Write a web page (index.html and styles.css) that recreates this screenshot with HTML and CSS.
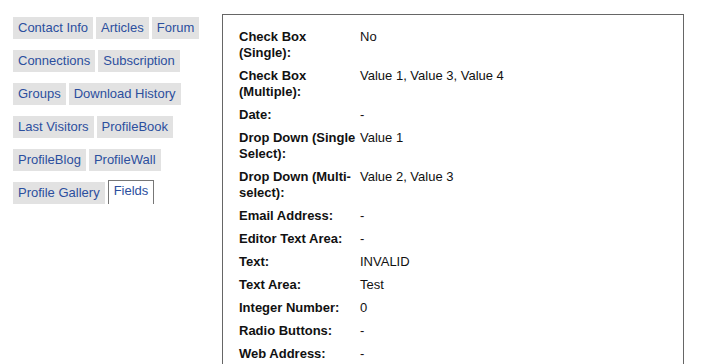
FILE: index.html
```html
<!DOCTYPE html>
<html lang="en">
<head>
  <meta charset="UTF-8" />
  <title>Profile — Fields</title>
  <link rel="stylesheet" href="styles.css">
</head>
<body>

<div class="page">
  <div class="tabs">
    <a href="#" class="tab">Contact Info</a>
    <a href="#" class="tab">Articles</a>
    <a href="#" class="tab">Forum</a>
    <a href="#" class="tab">Connections</a>
    <a href="#" class="tab">Subscription</a>
    <a href="#" class="tab">Groups</a>
    <a href="#" class="tab">Download History</a>
    <a href="#" class="tab">Last Visitors</a>
    <a href="#" class="tab">ProfileBook</a>
    <a href="#" class="tab">ProfileBlog</a>
    <a href="#" class="tab">ProfileWall</a>
    <a href="#" class="tab">Profile Gallery</a>
    <a href="#" class="tab active">Fields</a>
  </div>

  <div class="panel">
    <table class="fields">
      <tr><th>Check Box (Single):</th><td>No</td></tr>
      <tr><th>Check Box (Multiple):</th><td>Value 1, Value 3, Value 4</td></tr>
      <tr><th>Date:</th><td>-</td></tr>
      <tr><th>Drop Down (Single Select):</th><td>Value 1</td></tr>
      <tr><th>Drop Down (Multi-select):</th><td>Value 2, Value 3</td></tr>
      <tr><th>Email Address:</th><td>-</td></tr>
      <tr><th>Editor Text Area:</th><td>-</td></tr>
      <tr><th>Text:</th><td>INVALID</td></tr>
      <tr><th>Text Area:</th><td>Test</td></tr>
      <tr><th>Integer Number:</th><td>0</td></tr>
      <tr><th>Radio Buttons:</th><td>-</td></tr>
      <tr><th>Web Address:</th><td>-</td></tr>
    </table>
  </div>
</div>

</body>
</html>
```

FILE: styles.css
```css
body {
  font-family: 'Liberation Sans', Arial, sans-serif;
  font-size: 13px;
  margin: 0;
  background: #fff;
  color: #111;
}

.page {
  display: flex;
  align-items: flex-start;
  padding: 14px 0 0 13px;
}

.tabs {
  width: 209px;
  flex-shrink: 0;
  display: flex;
  flex-wrap: wrap;
  align-content: flex-start;
  gap: 11px 3px;
  padding-top: 3px;
}

.tab {
  display: block;
  padding: 3px 5px 4px;
  line-height: 15px;
  background: #e2e2e2;
  color: #2c4f9e;
  text-decoration: none;
}

.tab.active {
  background: #fff;
  border: 1px solid #777;
  border-bottom: none;
  padding: 2px 5px 6px;
  margin-top: -2px;
}

.panel {
  width: 444px;
  height: 400px;
  border: 1px solid #666;
  padding: 10px 0 0 16px;
}

.fields {
  border-collapse: collapse;
}

.fields th,
.fields td {
  padding: 4px 0 3px;
  line-height: 16px;
  vertical-align: top;
  text-align: left;
}

.fields th {
  width: 121px;
  font-weight: bold;
}
```
